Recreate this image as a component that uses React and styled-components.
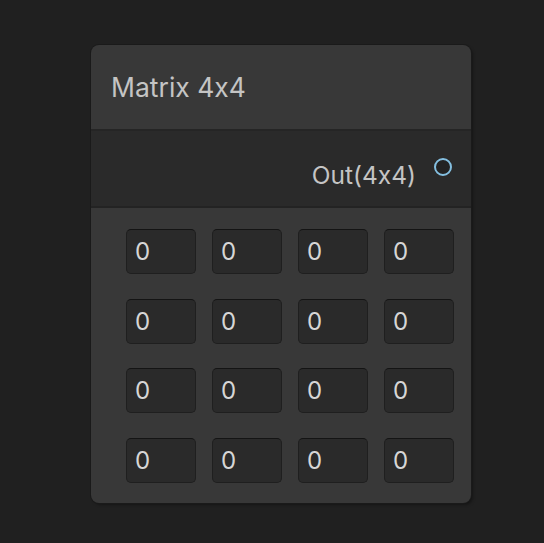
import React from 'react';
import styled, { createGlobalStyle } from 'styled-components';

const GlobalStyle = createGlobalStyle`
  html, body {
    margin: 0;
    padding: 0;
    background: #202020;
  }
  body {
    font-family: Inter, 'Noto Sans', sans-serif;
    font-feature-settings: 'calt' 0;
  }
`;

const Canvas = styled.div`
  width: 544px;
  height: 543px;
  background: #202020;
  padding: 45px 0 0 91px;
  box-sizing: border-box;
`;

const Node = styled.div`
  width: 380px;
  height: 458px;
  background: #383838;
  border-radius: 8px;
  box-shadow: 0 0 0 1px #1a1a1a, 2px 2px 3px rgba(0, 0, 0, 0.35);
  display: flex;
  flex-direction: column;
  overflow: hidden;
`;

const Header = styled.div`
  height: 86px;
  display: flex;
  align-items: center;
  padding-left: 20px;
  color: #c4c4c4;
  font-size: 26.5px;
  border-bottom: 2px solid #252525;
  box-sizing: border-box;
  flex-shrink: 0;
`;

const Ports = styled.div`
  height: 77px;
  background: #2a2a2a;
  border-bottom: 2px solid #232323;
  box-sizing: border-box;
  display: flex;
  align-items: center;
  justify-content: flex-end;
  padding-right: 19px;
  gap: 18px;
  flex-shrink: 0;
`;

const PortLabel = styled.span`
  color: #c4c4c4;
  font-size: 24.5px;
  margin-top: 13px;
`;

const PortDot = styled.span`
  width: 18px;
  height: 18px;
  border-radius: 50%;
  border: 2px solid #84bfe0;
  background: #232323;
  box-sizing: border-box;
  margin-top: -4px;
`;

const Grid = styled.div`
  display: grid;
  grid-template-columns: repeat(4, 70px);
  grid-auto-rows: 45px;
  column-gap: 16px;
  row-gap: 24.5px;
  padding: 21px 0 0 35px;
`;

const Cell = styled.div`
  background: #2a2a2a;
  border: 1px solid #1f1f1f;
  border-top-color: #141414;
  border-radius: 5px;
  box-sizing: border-box;
  display: flex;
  align-items: center;
  padding-left: 8px;
  color: #d6d6d6;
  font-size: 24px;
`;

export default function App() {
  const cells = Array.from({ length: 16 }, () => 0);
  return (
    <>
      <GlobalStyle />
      <Canvas>
        <Node>
          <Header>Matrix 4x4</Header>
          <Ports>
            <PortLabel>Out(4x4)</PortLabel>
            <PortDot />
          </Ports>
          <Grid>
            {cells.map((v, i) => (
              <Cell key={i}>{v}</Cell>
            ))}
          </Grid>
        </Node>
      </Canvas>
    </>
  );
}
